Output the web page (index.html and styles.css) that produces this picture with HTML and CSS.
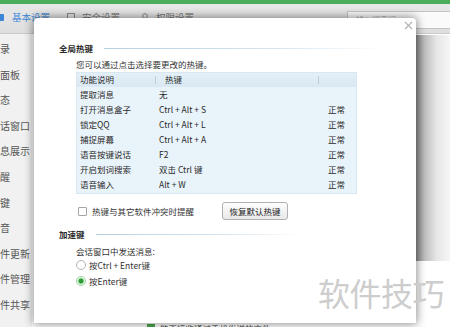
FILE: index.html
```html
<!DOCTYPE html>
<html lang="zh-CN">
<head>
<meta charset="utf-8">
<title>热键设置</title>
<link rel="stylesheet" href="styles.css">
</head>
<body>
<div class="app">
  <div class="topbar"></div>
  <div class="toolbar">
    <div class="tab active">
      <svg class="ticon" width="8" height="9" viewBox="0 0 8 9"><rect x="0" y="1" width="7" height="7" rx="1" fill="#3b86d6"/></svg>
      <span>基本设置</span>
    </div>
    <div class="tab t2">
      <svg class="ticon" width="8" height="9" viewBox="0 0 8 9"><rect x="0.5" y="0.5" width="7" height="6" fill="none" stroke="#8a8a8a"/><path d="M2 8.5h4" stroke="#8a8a8a"/></svg>
      <span>安全设置</span>
    </div>
    <div class="tab t3">
      <svg class="ticon" width="8" height="9" viewBox="0 0 8 9"><circle cx="4" cy="3" r="2.4" fill="none" stroke="#8a8a8a"/><path d="M0.5 9c0-2.5 1.5-3.5 3.5-3.5S7.5 6.5 7.5 9" fill="none" stroke="#8a8a8a"/></svg>
      <span>权限设置</span>
    </div>
    <div class="search">输入搜索词</div>
  </div>
  <div class="content">
    <nav class="sidebar">
      <div class="nav-item">录</div>
      <div class="nav-item">面板</div>
      <div class="nav-item">态</div>
      <div class="nav-item">话窗口</div>
      <div class="nav-item">息展示</div>
      <div class="nav-item">醒</div>
      <div class="nav-item">键</div>
      <div class="nav-item">音</div>
      <div class="nav-item">件更新</div>
      <div class="nav-item">件管理</div>
      <div class="nav-item">件共享</div>
    </nav>
    <main class="main">
      <div class="main-col">
        <div class="behind-row"><span class="gcheck"></span>能否接收通过手机发送的文件</div>
      </div>
      <div class="shade"></div>
    </main>
  </div>

  <div class="dialog">
    <svg class="close" width="9" height="9" viewBox="0 0 9 9"><path d="M1 1L8 8M8 1L1 8" stroke="#b4b4b4" stroke-width="1.2"/></svg>
    <div class="sec-title"><span>全局热键</span><i class="rule"></i></div>
    <div class="indent">
      <p class="hint">您可以通过点击选择要更改的热键。</p>
      <div class="table">
        <div class="thead">
          <span class="c1">功能说明</span><span class="c2">热键</span><span class="c3"></span>
        </div>
        <div class="row"><span class="c1">提取消息</span><span class="c2">无</span><span class="c3"></span></div>
        <div class="row"><span class="c1">打开消息盒子</span><span class="c2">Ctrl + Alt + S</span><span class="c3">正常</span></div>
        <div class="row"><span class="c1">锁定QQ</span><span class="c2">Ctrl + Alt + L</span><span class="c3">正常</span></div>
        <div class="row"><span class="c1">捕捉屏幕</span><span class="c2">Ctrl + Alt + A</span><span class="c3">正常</span></div>
        <div class="row"><span class="c1">语音按键说话</span><span class="c2">F2</span><span class="c3">正常</span></div>
        <div class="row"><span class="c1">开启划词搜索</span><span class="c2">双击 Ctrl 键</span><span class="c3">正常</span></div>
        <div class="row"><span class="c1">语音输入</span><span class="c2">Alt + W</span><span class="c3">正常</span></div>
      </div>
      <div class="optrow">
        <label class="check"><span class="box"></span>热键与其它软件冲突时提醒</label>
        <button class="btn">恢复默认热键</button>
      </div>
    </div>
    <div class="sec-title sec2"><span>加速键</span><i class="rule"></i></div>
    <div class="indent">
      <p class="label">会话窗口中发送消息:</p>
      <div class="radio"><span class="rb"></span>按Ctrl + Enter键</div>
      <div class="radio on"><span class="rb"></span>按Enter键</div>
    </div>
  </div>

  <div class="watermark">软件技巧</div>
</div>
</body>
</html>
```

FILE: styles.css
```css
* { box-sizing: border-box; }
html, body { margin: 0; padding: 0; }
body {
  width: 450px;
  height: 327px;
  overflow: hidden;
  background: #fff;
  font-family: "Noto Sans CJK SC", "Noto Sans", sans-serif;
  font-size: 8.5px;
  color: #333;
}
.app {
  position: relative;
  height: 327px;
  display: flex;
  flex-direction: column;
  overflow: hidden;
}
.topbar { height: 4px; background: #4cae5b; flex: none; }
.toolbar {
  flex: none;
  height: 30px;
  display: flex;
  align-items: flex-start;
  padding-top: 7px;
  background: linear-gradient(#e8e8e8, #dedede);
  border-bottom: 1px solid #c9c9c9;
  font-size: 9.5px;
  line-height: 12px;
  color: #777;
}
.tab { display: flex; align-items: center; gap: 7px; }
.tab.active { color: #3b86d6; margin-left: -3px; }
.tab.t2 { margin-left: 17px; }
.tab.t3 { margin-left: 21px; }
.ticon { flex: none; }
.search {
  margin-left: auto;
  margin-right: -4px;
  margin-top: 0;
  width: 107px;
  height: 18px;
  border: 1px solid #c4c4c4;
  background: #fafafa;
  color: #aaa;
  font-size: 8px;
  line-height: 16px;
  padding-left: 8px;
}
.content { flex: 1; display: flex; min-height: 0; }
.sidebar {
  width: 32px;
  flex: none;
  background: #f1f1f1;
  padding-top: 2px;
  font-size: 10px;
  color: #555;
  overflow: hidden;
}
.nav-item { height: 25.6px; line-height: 25.6px; white-space: nowrap; }
.main { flex: 1; display: flex; background: #fff; overflow: hidden; }
.main-col { flex: 1; padding: 288px 0 0 115px; }
.behind-row { display: flex; align-items: center; gap: 5px; color: #444; line-height: 12px; }
.gcheck { width: 8px; height: 8px; background: #49a84f; }
.shade {
  flex: none;
  width: 34px;
  height: 226px;
  margin-top: 1px;
  background: linear-gradient(to right, #8d8d8d, #bdbdbd 25%, #e6e6e6 60%, #f6f6f6);
}

.dialog {
  position: absolute;
  left: 34px;
  top: 18px;
  width: 382px;
  height: 305px;
  background: #fff;
  border-radius: 4px 4px 0 0;
  box-shadow: 0 0 10px 1px rgba(0, 0, 0, 0.45);
  padding: 24px 0 0 25px;
}
.close { position: absolute; right: 3px; top: 3px; }
.sec-title {
  display: flex;
  align-items: center;
  gap: 11px;
  height: 12px;
  font-weight: 700;
  color: #2a2a2a;
}
.rule {
  flex: 1;
  height: 1px;
  background: linear-gradient(to right, #b6cfe1, #d5e4ef 55%, rgba(255, 255, 255, 0) 90%);
}
.sec2 { margin-top: 8px; }
.sec2 .rule { margin-right: 90px; }
.indent { padding-left: 17px; }
.hint, .label { margin: 0; line-height: 12px; }
.hint { margin-top: 4px; }
.table {
  margin-top: 2px;
  width: 281px;
  background: #e9f3fa;
  border: 1px solid #d8e7f2;
  padding-bottom: 1px;
  color: #2a2a2a;
}
.thead, .row {
  display: grid;
  grid-template-columns: 78px 163px 38px;
  white-space: nowrap;
}
.thead {
  height: 14px;
  line-height: 13px;
  background: linear-gradient(#e4eff7, #d9e8f3);
}
.row { height: 15px; line-height: 15px; }
.thead .c1 { padding-left: 3px; }
.thead .c2, .thead .c3 { position: relative; padding-left: 10px; }
.thead .c2::before, .thead .c3::before {
  content: "";
  position: absolute;
  left: 0;
  top: 3px;
  height: 8px;
  width: 1px;
  background: #bccfdd;
}
.row .c1 { padding-left: 3px; }
.row .c2 { padding-left: 4px; }
.row .c3 { padding-left: 10px; }
.optrow {
  margin-top: 8px;
  height: 18px;
  display: grid;
  grid-template-columns: 146px auto;
  align-items: center;
  justify-items: start;
}
.check { display: flex; align-items: center; gap: 5px; padding-left: 2px; color: #333; }
.box {
  width: 9px;
  height: 9px;
  border: 1px solid #a5a5a5;
  background: #fff;
  border-radius: 1px;
}
.btn {
  width: 66px;
  height: 18px;
  padding: 0;
  border: 1px solid #b0b0b0;
  border-radius: 3px;
  background: linear-gradient(#fdfdfd, #e9e9e9);
  font-family: inherit;
  font-size: 8.5px;
  color: #222;
}
.label { margin-top: 5px; }
.radio {
  display: flex;
  align-items: center;
  gap: 3px;
  height: 12px;
  line-height: 12px;
  margin-top: 2px;
}
.radio.on { margin-top: 4px; }
.rb {
  width: 10px;
  height: 10px;
  border-radius: 50%;
  border: 1px solid #b4b4b4;
  background: #fff;
}
.radio.on .rb {
  border-color: #9bd19b;
  background: radial-gradient(circle, #2f9f35 0 2.2px, #b8e3b8 2.8px, #fff 4px);
}
.watermark {
  position: absolute;
  left: 318px;
  top: 273px;
  font-size: 32px;
  line-height: 38px;
  color: #cdcdcd;
  white-space: nowrap;
  letter-spacing: -0.5px;
}
```
